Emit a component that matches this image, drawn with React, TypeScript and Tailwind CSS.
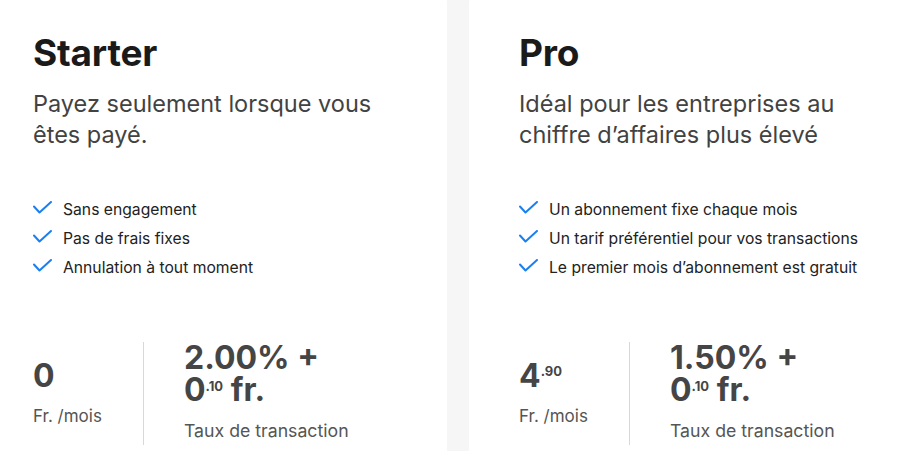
const plans = [
  {
    name: 'Starter',
    lines: ['Payez seulement lorsque vous', 'êtes payé.'],
    features: ['Sans engagement', 'Pas de frais fixes', 'Annulation à tout moment'],
    monthly: '0',
    monthlyCents: '',
    rate: '2.00% +',
  },
  {
    name: 'Pro',
    lines: ['Idéal pour les entreprises au', 'chiffre d’affaires plus élevé'],
    features: [
      'Un abonnement fixe chaque mois',
      'Un tarif préférentiel pour vos transactions',
      'Le premier mois d’abonnement est gratuit',
    ],
    monthly: '4',
    monthlyCents: '.90',
    rate: '1.50% +',
  },
];

function CheckMark() {
  return (
    <svg width="19" height="13" viewBox="0 0 19 13" fill="none" className="flex-none">
      <path d="M1 5.5 6.5 11.5 18 1" stroke="#1a7ff0" strokeWidth="2" strokeLinecap="round" strokeLinejoin="round" />
    </svg>
  );
}

function PlanCard({ plan }: { plan: (typeof plans)[number] }) {
  return (
    <div className="w-[464px] flex-none rounded-2xl bg-white px-[50px] pt-[43px] pb-10">
      <h2 className="text-[37px] font-bold leading-[44px] text-[#1a1a1a] tracking-[-0.2px]">{plan.name}</h2>
      <p className="mt-[13px] text-[23.5px] leading-[31px] text-[#424242]">
        {plan.lines[0]}
        <br />
        {plan.lines[1]}
      </p>

      <ul className="mt-[49px] flex flex-col gap-[7px]">
        {plan.features.map((f) => (
          <li key={f} className="flex items-start gap-[11px] text-[15.7px] leading-[22px] text-[#222]">
            <span className="pt-[2px]">
              <CheckMark />
            </span>
            {f}
          </li>
        ))}
      </ul>

      <div className="mt-[63px] flex">
        <div className="w-[110px] flex-none pt-[16px]">
          <div className="text-[32px] font-bold leading-[36px] text-[#454545]">
            {plan.monthly}
            {plan.monthlyCents && (
              <span className="align-top text-[13px] font-bold leading-[26px]">{plan.monthlyCents}</span>
            )}
          </div>
          <div className="mt-[11px] text-[17px] leading-[22px] text-[#555]">Fr. /mois</div>
        </div>
        <div className="border-l border-[#d8d8d8] pl-10 pb-[3px]">
          <div className="text-[32px] font-bold leading-[32px] text-[#454545]">
            {plan.rate}
            <br />
            0<span className="align-top text-[13px] font-bold leading-[24px]">.10</span> fr.
          </div>
          <div className="mt-[14px] text-[17.7px] leading-[22px] text-[#555]">Taux de transaction</div>
        </div>
      </div>
    </div>
  );
}

export default function App() {
  return (
    <div className="h-[451px] w-[916px] overflow-hidden bg-[#f6f6f6] font-['Inter',sans-serif]">
      <div className="ml-[-17px] mt-[-12px] flex gap-[22px]">
        {plans.map((p) => (
          <PlanCard key={p.name} plan={p} />
        ))}
      </div>
    </div>
  );
}
